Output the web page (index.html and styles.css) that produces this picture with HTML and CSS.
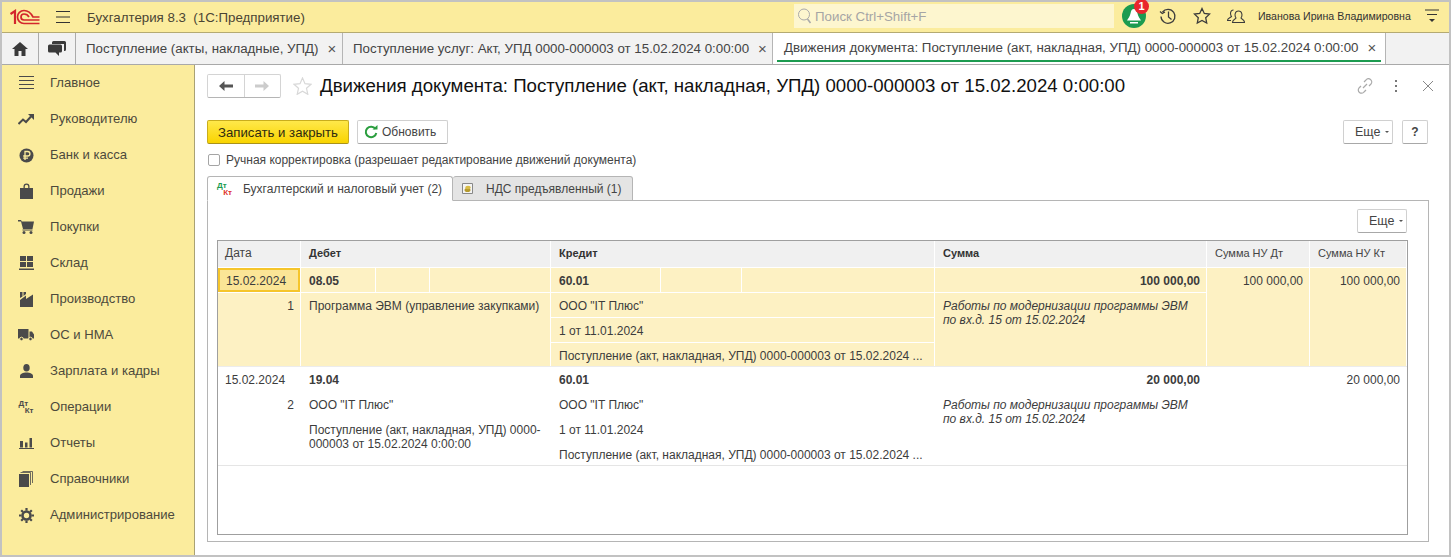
FILE: index.html
```html
<!DOCTYPE html>
<html>
<head>
  <title>Бухгалтерия 8.3</title>
  <link rel="stylesheet" href="styles.css">
</head>
<body>
<div class="window">

  <div class="topbar">
    <svg class="logo" width="30" height="16" viewBox="0 0 30 16"><path d="M0.500 5L5 2V15" fill="none" stroke="#d3262c" stroke-width="2.200"/><path d="M29.500 8H23C21 4 18 1.500 14 1.500A6.500 6.500 0 0 0 14 14.500H29.500M19 8C18 6 16 5 14 5A3 3 0 0 0 14 11H29.500" fill="none" stroke="#d3262c" stroke-width="1.700"/></svg>
    <svg class="burger" width="16" height="12" viewBox="0 0 16 12"><path d="M1 .5h14M1 6h14M1 11.500h14" stroke="#333" stroke-width="1"/></svg>
    <span class="app-title">Бухгалтерия 8.3&nbsp; (1С:Предприятие)</span>
    <div class="search">
      <svg width="15" height="16" viewBox="0 0 15 16"><circle cx="7" cy="6.500" r="5.500" fill="none" stroke="#aaa"/><path d="M10.500 11l3 4" stroke="#aaa" stroke-width="1.500"/></svg>
      <span>Поиск Ctrl+Shift+F</span>
    </div>
    <div class="bell">
      <svg width="24" height="24" viewBox="0 0 24 24"><circle cx="12" cy="12" r="12" fill="#1c9b50"/><path d="M12 5c2.500 0 3 2 3.500 4.500.5 3 2.500 5 3.500 7H5c1-2 3-4 3.500-7C9 7 9.500 5 12 5z" fill="#fff"/><path d="M8 18h8v1.500H8z" fill="#fff"/></svg>
      <span class="badge">1</span>
    </div>
    <svg class="top-icon icon-history" width="18" height="18" viewBox="0 0 18 18"><path d="M3.500 5a7 7 0 1 1-1.500 4.500M1 4.500l2.300 2 2.700-1.500M9.500 4.500V10l3 2.500" fill="none" stroke="#3c3c3c" stroke-width="1.300"/></svg>
    <svg class="top-icon" width="18" height="18" viewBox="0 0 18 18"><path d="M9 1.500l2.300 5 5.200.6-3.800 3.600 1 5.300L9 13.400 4.300 16l1-5.300L1.500 7.100l5.200-.6z" fill="none" stroke="#3c3c3c" stroke-width="1.300"/></svg>
    <svg class="top-icon" width="18" height="18" viewBox="0 0 18 18"><path d="M5.500 15.500c0-3 2.500-3 3.500-4.500-1.500-2-1.500-7 2.500-7s4 5 2.500 7c1 1.500 3.500 1.500 3.500 4.500zM6.500 3C3 3 3 7.500 4.500 9.500 3 11 .5 11 .5 13.500H4" fill="none" stroke="#3c3c3c" stroke-width="1.100"/></svg>
    <span class="user-name">Иванова Ирина Владимировна</span>
    <svg class="user-menu" width="14" height="14" viewBox="0 0 14 14"><path d="M0 1h14M2 5.500h10" stroke="#333"/><path d="M4 10h6l-3 3z" fill="#333"/></svg>
  </div>

  <div class="tabbar">
    <div class="tab-icon">
      <svg width="16" height="14" viewBox="0 0 16 14"><path d="M8 0L0 7h2.500v7H6.500V9h3v5h4V7H16z" fill="#3a3a3a"/></svg>
    </div>
    <div class="tab-icon">
      <svg width="18" height="16" viewBox="0 0 18 16"><path d="M4 1.500A1.500 1.500 0 0 1 5.500 0h11A1.500 1.500 0 0 1 18 1.500v7A1.500 1.500 0 0 1 16.500 10H16V3H4z" fill="#3a3a3a"/><path d="M1.500 3.500h11A1.500 1.500 0 0 1 14 5v5a1.500 1.500 0 0 1-1.500 1.500H11V15l-3.500-3.500h-6A1.500 1.500 0 0 1 0 10V5a1.500 1.500 0 0 1 1.500-1.500z" fill="#3a3a3a"/></svg>
    </div>
    <div class="doc-tab tab-first">Поступление (акты, накладные, УПД)<span class="tab-close">×</span></div>
    <div class="doc-tab tab-second">Поступление услуг: Акт, УПД 0000-000003 от 15.02.2024 0:00:00<span class="tab-close">×</span></div>
    <div class="doc-tab tab-active">
      <span class="active-label">Движения документа: Поступление (акт, накладная, УПД) 0000-000003 от 15.02.2024 0:00:00<span class="tab-close">×</span></span>
    </div>
  </div>

  <div class="main">
    <div class="sidebar">
      <div class="side-item">
        <svg width="15" height="14" viewBox="0 0 15 14"><path d="M0 .5h15M0 4.500h15M0 8.500h15M0 12.500h15" stroke="#4a4a4a"/></svg>
        <span>Главное</span>
      </div>
      <div class="side-item">
        <svg width="16" height="11" viewBox="0 0 16 11"><path d="M.5 10l4.500-4.500 3 2.500 5-5.500" fill="none" stroke="#4a4a4a" stroke-width="2"/><path d="M10 0h6v6z" fill="#4a4a4a"/></svg>
        <span>Руководителю</span>
      </div>
      <div class="side-item">
        <svg width="15" height="15" viewBox="0 0 15 15"><circle cx="7.500" cy="7.500" r="7" fill="#4a4a4a"/><path d="M6 12V3.500h2.700a2.200 2.200 0 0 1 0 4.500H4.200M4.200 10.200h4.800" fill="none" stroke="#fbec9d" stroke-width="1.300"/></svg>
        <span>Банк и касса</span>
      </div>
      <div class="side-item">
        <svg width="13" height="16" viewBox="0 0 13 16"><path d="M0 5h3.500V3.500a3 3 0 0 1 6 0V5H13v11H0zM4.800 5h3.400V3.500a1.700 1.700 0 0 0-3.400 0z" fill="#4a4a4a" fill-rule="evenodd"/></svg>
        <span>Продажи</span>
      </div>
      <div class="side-item">
        <svg width="16" height="14" viewBox="0 0 16 14"><path d="M0 0h3l.8 1.500H16L14.500 9H5L3 1.500H0z" fill="#4a4a4a"/><path d="M4.500 10h10" stroke="#4a4a4a"/><circle cx="6" cy="12.500" r="1.500" fill="#4a4a4a"/><circle cx="13" cy="12.500" r="1.500" fill="#4a4a4a"/></svg>
        <span>Покупки</span>
      </div>
      <div class="side-item">
        <svg width="15" height="14" viewBox="0 0 15 14"><path d="M1 0h6v5H1zM8 0h6v5H8zM1 6h6v5H1zM8 6h6v5H8zM0 12.500h15V14H0z" fill="#4a4a4a"/></svg>
        <span>Склад</span>
      </div>
      <div class="side-item">
        <svg width="15" height="15" viewBox="0 0 15 15"><path d="M1 0h2.500v4.500L1 6zM4.500 0H7v2L4.500 4zM1 8l6-4.500V7l7-4.500V15H1z" fill="#4a4a4a"/></svg>
        <span>Производство</span>
      </div>
      <div class="side-item">
        <svg width="16" height="12" viewBox="0 0 16 12"><path d="M0 0h10.500v9.500H0zM11.500 2.500h2.500l2 3v4h-4.500z" fill="#4a4a4a"/><circle cx="3.500" cy="10" r="1.800" fill="#4a4a4a" stroke="#fbec9d"/><circle cx="12.500" cy="10" r="1.800" fill="#4a4a4a" stroke="#fbec9d"/></svg>
        <span>ОС и НМА</span>
      </div>
      <div class="side-item">
        <svg width="13" height="14" viewBox="0 0 13 14"><ellipse cx="6.500" cy="3.800" rx="3.200" ry="3.800" fill="#4a4a4a"/><path d="M0 14v-2c0-2 3-3.500 6.500-3.500S13 10 13 12v2z" fill="#4a4a4a"/></svg>
        <span>Зарплата и кадры</span>
      </div>
      <div class="side-item">
        <span class="dt-kt"><i>Дт</i><b>Кт</b></span>
        <span>Операции</span>
      </div>
      <div class="side-item">
        <svg width="15" height="12" viewBox="0 0 15 12"><path d="M1 4h3v6.500H1zM6 5.500h2.500v5H6zM10.500 1H13v9.500h-2.500zM0 11h15v1H0z" fill="#4a4a4a"/></svg>
        <span>Отчеты</span>
      </div>
      <div class="side-item">
        <svg width="14" height="16" viewBox="0 0 14 16"><path d="M0 3h10v13H0z" fill="#4a4a4a"/><path d="M1.500 1.500h10V14M3.500.5h10V12" fill="none" stroke="#4a4a4a" stroke-width=".8"/></svg>
        <span>Справочники</span>
      </div>
      <div class="side-item">
        <svg width="15" height="15" viewBox="0 0 15 15"><circle cx="7.500" cy="7.500" r="4" fill="none" stroke="#4a4a4a" stroke-width="2.600"/><path d="M7.500 0v2.500M7.500 12.500V15M0 7.500h2.500M12.500 7.500H15M2.200 2.200L4 4M11 11l1.800 1.800M12.800 2.200L11 4M4 11l-1.800 1.800" stroke="#4a4a4a" stroke-width="2.200"/></svg>
        <span>Администрирование</span>
      </div>
    </div>

    <div class="content">
      <div class="title-row">
        <div class="nav-group">
          <div class="nav-btn"><svg width="14" height="10" viewBox="0 0 14 10"><path d="M5.500 0v3.500H14v3H5.500V10L0 5z" fill="#555"/></svg></div>
          <div class="nav-btn"><svg width="14" height="10" viewBox="0 0 14 10"><path d="M8.500 0v3.500H0v3h8.500V10L14 5z" fill="#ccc"/></svg></div>
        </div>
        <svg class="fav" width="19" height="18" viewBox="0 0 19 18"><path d="M9.500 1l2.500 5.700 6 .6-4.500 4 1.300 6-5.300-3.100-5.300 3.100 1.300-6-4.500-4 6-.6z" fill="none" stroke="#d8d8d8" stroke-width="1.200"/></svg>
        <h1 class="doc-title">Движения документа: Поступление (акт, накладная, УПД) 0000-000003 от 15.02.2024 0:00:00</h1>
        <svg class="form-link" width="16" height="16" viewBox="0 0 16 16"><path d="M6 10l4-4M7 4l2-2a3 3 0 0 1 5 4l-2 2M9 12l-2 2a3 3 0 0 1-5-4l2-2" fill="none" stroke="#aaa" stroke-width="1.200"/></svg>
        <svg class="form-more" width="4" height="12" viewBox="0 0 4 12"><path d="M1 0h2v2H1zM1 5h2v2H1zM1 10h2v2H1z" fill="#777"/></svg>
        <svg class="form-close" width="12" height="12" viewBox="0 0 12 12"><path d="M1 1l10 10M11 1L1 11" stroke="#888"/></svg>
      </div>

      <div class="command-row">
        <div class="btn btn-primary">Записать и закрыть</div>
        <div class="btn btn-refresh">
          <svg width="14" height="14" viewBox="0 0 14 14"><path d="M11.500 4A5.300 5.300 0 1 0 12.300 8" fill="none" stroke="#2b9e3f" stroke-width="2"/><path d="M8.500 4.500h5V0z" fill="#2b9e3f"/></svg>
          Обновить
        </div>
        <div class="btn btn-more cmd-more">Еще<span class="caret"></span></div>
        <div class="btn btn-help">?</div>
      </div>

      <div class="check-row">
        <span class="checkbox"></span>
        <span>Ручная корректировка (разрешает редактирование движений документа)</span>
      </div>

      <div class="form-tabs">
        <div class="form-tab form-tab-active">
          <span class="dt-kt dt-kt-color"><i>Дт</i><b>Кт</b></span>
          Бухгалтерский и налоговый учет (2)
        </div>
        <div class="form-tab form-tab-off">
          <svg width="11" height="11" viewBox="0 0 11 11"><path d="M.5.500h10v10H.5z" fill="#f4f4f4" stroke="#888"/><ellipse cx="5.500" cy="7" rx="3" ry="2" fill="#b59a2d"/><ellipse cx="6" cy="4.500" rx="2.800" ry="1.800" fill="#d9bc45"/></svg>
          НДС предъявленный (1)
        </div>
      </div>

      <div class="tab-panel">
        <div class="panel-tools">
          <div class="btn btn-more">Еще<span class="caret"></span></div>
        </div>
        <div class="grid-box">
          <div class="grid-head">
            <div class="head-cell">Дата</div>
            <div class="head-cell head-bold">Дебет</div>
            <div class="head-cell head-bold">Кредит</div>
            <div class="head-cell head-bold">Сумма</div>
            <div class="head-cell head-small">Сумма НУ Дт</div>
            <div class="head-cell head-small">Сумма НУ Кт</div>
          </div>

          <div class="movement movement-current">
            <div class="cell c-date cell-selected">15.02.2024</div>
            <div class="cell c-debit strong split-cell">
              <span>08.05</span><span></span><span></span>
            </div>
            <div class="cell c-credit strong split-cell split-credit">
              <span>60.01</span><span></span><span></span>
            </div>
            <div class="cell c-sum strong right">100 000,00</div>
            <div class="cell c-nu-dt right top-cell">100 000,00</div>
            <div class="cell c-nu-kt right top-cell">100 000,00</div>
            <div class="cell c-date-low right top-cell">1</div>
            <div class="cell c-debit-low top-cell">Программа ЭВМ (управление закупками)</div>
            <div class="cell c-credit">ООО "IT Плюс"</div>
            <div class="cell c-credit">1 от 11.01.2024</div>
            <div class="cell c-credit">Поступление (акт, накладная, УПД) 0000-000003 от 15.02.2024 ...</div>
            <div class="cell c-note note">Работы по модернизации программы ЭВМ<br>по вх.д. 15 от 15.02.2024</div>
          </div>

          <div class="movement movement-plain">
            <div class="cell c-date">15.02.2024</div>
            <div class="cell c-debit strong">19.04</div>
            <div class="cell c-credit strong">60.01</div>
            <div class="cell c-sum strong right">20 000,00</div>
            <div class="cell c-nu-dt right top-cell"></div>
            <div class="cell c-nu-kt right top-cell">20 000,00</div>
            <div class="cell c-date-low right top-cell">2</div>
            <div class="cell c-debit-2">ООО "IT Плюс"</div>
            <div class="cell c-debit-3 top-cell wrap-cell">Поступление (акт, накладная, УПД) 0000-000003 от 15.02.2024 0:00:00</div>
            <div class="cell c-credit">ООО "IT Плюс"</div>
            <div class="cell c-credit">1 от 11.01.2024</div>
            <div class="cell c-credit">Поступление (акт, накладная, УПД) 0000-000003 от 15.02.2024 ...</div>
            <div class="cell c-note note">Работы по модернизации программы ЭВМ<br>по вх.д. 15 от 15.02.2024</div>
          </div>
        </div>
      </div>
    </div>
  </div>

</div>
</body>
</html>
```

FILE: styles.css
```css
* { box-sizing: border-box; }
html, body { margin: 0; height: 100%; background: #fff; }
body { font-family: "Liberation Sans", Arial, sans-serif; font-size: 12px; color: #3a3a3a; overflow: hidden; }

.window {
  width: 1451px;
  height: 557px;
  border: 2px solid #c2c2c2;
  display: flex;
  flex-direction: column;
}

/* top yellow bar */
.topbar {
  height: 31px;
  background: #fbec9d;
  border-bottom: 1px solid #b4aa72;
  display: flex;
  align-items: center;
  flex: none;
}
.logo { margin-left: 8px; flex: none; }
.burger { margin-left: 15px; flex: none; }
.app-title { margin-left: 16px; width: 707px; flex: none; font-size: 13.300px; color: #4a4434; white-space: nowrap; }
.search {
  width: 320px;
  height: 24px;
  margin-top: -2px;
  background: #fdf6cf;
  display: flex;
  align-items: center;
  gap: 3px;
  padding-left: 3px;
  font-size: 13.300px;
  color: #a5a5a5;
  flex: none;
}
.bell { position: relative; margin-left: 8px; margin-top: -2px; width: 24px; height: 24px; flex: none; }
.badge {
  position: absolute;
  left: 12px;
  top: -5px;
  width: 15px;
  height: 15px;
  border-radius: 50%;
  background: #e9262d;
  color: #fff;
  font-size: 11px;
  font-weight: bold;
  text-align: center;
  line-height: 15px;
}
.top-icon { margin-left: 16px; flex: none; margin-top: -2px; }
.icon-history { margin-left: 13px; }
.user-name { margin-left: 13px; font-size: 10.600px; color: #333; white-space: nowrap; margin-top: -2px; }
.user-menu { margin-left: 14px; flex: none; margin-top: -2px; }

/* open documents bar */
.tabbar {
  height: 32px;
  background: #f2f2f2;
  border-bottom: 1px solid #a9a9a9;
  display: flex;
  flex: none;
}
.tab-icon {
  width: 37px;
  border-right: 1px solid #ababab;
  display: flex;
  align-items: center;
  justify-content: center;
}
.doc-tab {
  border-right: 1px solid #b5b5b5;
  display: flex;
  align-items: center;
  white-space: nowrap;
  font-size: 13.320px;
  color: #444;
}
.tab-first { width: 267px; padding-left: 10px; }
.tab-second { width: 430px; padding-left: 10px; }
.tab-active { width: 613px; padding: 0 4px; background: #fff; align-items: stretch; }
.active-label {
  flex: 1;
  display: flex;
  align-items: center;
  padding: 2px 0 0 7px;
  border-bottom: 2px solid #1c9b50;
  margin-bottom: 2px;
}
.tab-close { margin-left: 9px; font-size: 15px; color: #555; line-height: 12px; }

.main { flex: 1; display: flex; min-height: 0; }

/* left section panel */
.sidebar {
  width: 193px;
  background: #fbec9d;
  border-right: 1px solid #aaa274;
  flex: none;
}
.side-item {
  height: 36px;
  display: grid;
  grid-template-columns: 16px 1fr;
  column-gap: 16px;
  align-items: center;
  justify-items: center;
  padding-left: 16px;
  color: #4d4a3c;
  font-size: 13.100px;
}
.side-item > span:last-child { justify-self: start; margin-top: -2px; }

.dt-kt { display: inline-flex; flex-direction: column; width: 15px; font-size: 8px; line-height: 7px; font-weight: bold; color: #4a4a4a; flex: none; }
.dt-kt i { font-style: normal; }
.dt-kt b { align-self: flex-end; }
.dt-kt-color i { color: #1c9b50; }
.dt-kt-color b { color: #e0352c; }

.content { flex: 1; padding: 9px 20px 0 12px; display: flex; flex-direction: column; min-width: 0; }

.title-row { height: 24px; display: flex; align-items: center; }
.nav-group { display: flex; width: 74px; height: 24px; border: 1px solid #d4d4d4; border-bottom-color: #b5b5b5; border-radius: 2px; flex: none; }
.nav-btn { flex: 1; display: flex; align-items: center; justify-content: center; }
.nav-btn:first-child { border-right: 1px solid #d4d4d4; }
.fav { margin-left: 12px; flex: none; }
.doc-title { margin: 0 0 0 8px; font-size: 18.670px; font-weight: normal; color: #111; white-space: nowrap; flex: 1; }
.form-link { flex: none; margin-right: 21px; }
.form-more { flex: none; margin-right: 24px; }
.form-close { flex: none; margin-right: -5px; }

.command-row { display: flex; margin-top: 22px; height: 24px; }
.btn {
  height: 24px;
  border: 1px solid #d0d0d0;
  border-bottom-color: #a8a8a8;
  border-radius: 2px;
  background: #fff;
  display: flex;
  align-items: center;
  color: #444;
}
.btn-primary {
  width: 142px;
  justify-content: center;
  font-size: 13.200px;
  color: #2e2a10;
  background: linear-gradient(#ffe84a, #f9d400);
  border-color: #c9ad1c;
  border-bottom-color: #a9921a;
}
.btn-refresh { width: 91px; margin-left: 8px; padding-left: 6px; gap: 4px; }
.btn-more { width: 50px; padding-left: 11px; font-size: 12.500px; }
.cmd-more { margin-left: auto; }
.btn-help { width: 26px; margin-left: 9px; justify-content: center; font-weight: bold; margin-right: 1px; }
.caret { width: 0; height: 0; margin-left: 5px; border: 2px solid transparent; border-top: 2px solid #555; margin-top: 2px; }

.check-row { display: flex; align-items: center; margin-top: 8px; height: 16px; color: #444; gap: 6px; padding-left: 1px; }
.checkbox { width: 12px; height: 12px; border: 1px solid #a5a5a5; border-radius: 2px; background: #fff; flex: none; }

.form-tabs { display: flex; height: 25px; margin-top: 8px; margin-bottom: -1px; position: relative; }
.form-tab { display: flex; align-items: center; border: 1px solid #b5b5b5; border-radius: 3px 3px 0 0; color: #444; white-space: nowrap; }
.form-tab-active { width: 246px; background: #fff; border-bottom-color: #fff; padding-left: 9px; gap: 11px; }
.form-tab-off { width: 180px; background: #e4e4e4; border-left: 0; padding-left: 9px; gap: 13px; }

.tab-panel {
  width: 1222px;
  height: 342px;
  border: 1px solid #b5b5b5;
  padding: 8px 21px 0 9px;
}
.panel-tools { display: flex; justify-content: flex-end; height: 24px; }

/* movements grid */
.grid-box { width: 1191px; height: 295px; margin-top: 7px; border: 1px solid #9f9f9f; }
.grid-head, .movement {
  display: grid;
  grid-template-columns: 82px 249px 383px 271px 102px 96px;
  column-gap: 1px;
}
.grid-head { height: 26px; margin-bottom: 1px; border-bottom: 0; }
.head-cell {
  background: #f0f0f0;
  display: flex;
  align-items: center;
  padding: 0 0 2px 7px;
  color: #444;
}
.head-bold { font-weight: bold; font-size: 11px; padding-left: 8px; color: #333; }
.head-small { font-size: 11px; padding-left: 8px; }

.movement { grid-template-rows: 24px 24px 24px 23px; row-gap: 1px; }
.movement-current { height: 99px; border-bottom: 1px solid #ececec; }
.movement-current .cell { background: #fdf1c3; }
.movement-plain { grid-template-rows: 24px 24px 24px 24px; height: 99px; border-bottom: 1px solid #e5e5e5; }

.cell { padding: 2px 8px 0; display: flex; align-items: center; white-space: nowrap; color: #3c3c3c; min-width: 0; }
.top-cell { align-items: flex-start; padding-top: 6px; }
.strong { font-weight: bold; }
.right { justify-content: flex-end; padding-right: 6px; }
.c-date { grid-column: 1; grid-row: 1; padding-left: 7px; }
.c-date-low { grid-column: 1; grid-row: 2 / 5; }
.c-debit { grid-column: 2; grid-row: 1; }
.c-debit-low { grid-column: 2; grid-row: 2 / 5; }
.c-debit-2 { grid-column: 2; grid-row: 2; }
.c-debit-3 { grid-column: 2; grid-row: 3 / 5; }
.c-credit { grid-column: 3; }
.c-sum { grid-column: 4; grid-row: 1; }
.c-note { grid-column: 4; grid-row: 2 / 5; }
.c-nu-dt { grid-column: 5; grid-row: 1 / 5; }
.c-nu-kt { grid-column: 6; grid-row: 1 / 5; }
.note { font-style: italic; align-items: flex-start; padding-top: 6px; line-height: 14px; }
.wrap-cell { white-space: normal; line-height: 14px; }

.cell-selected { border: 2px solid #f5c52b; padding: 2px 0 0 6px; }
.movement-current .cell-selected { background: #fbe596; }

.movement-current .split-cell { padding: 0; background: #fff; display: grid; grid-template-columns: 74px 53px 1fr; column-gap: 1px; align-items: stretch; }
.split-cell span { background: #fdf1c3; padding: 2px 8px 0; display: flex; align-items: center; }
.movement-current .split-credit { grid-template-columns: 109px 80px 1fr; }
```
